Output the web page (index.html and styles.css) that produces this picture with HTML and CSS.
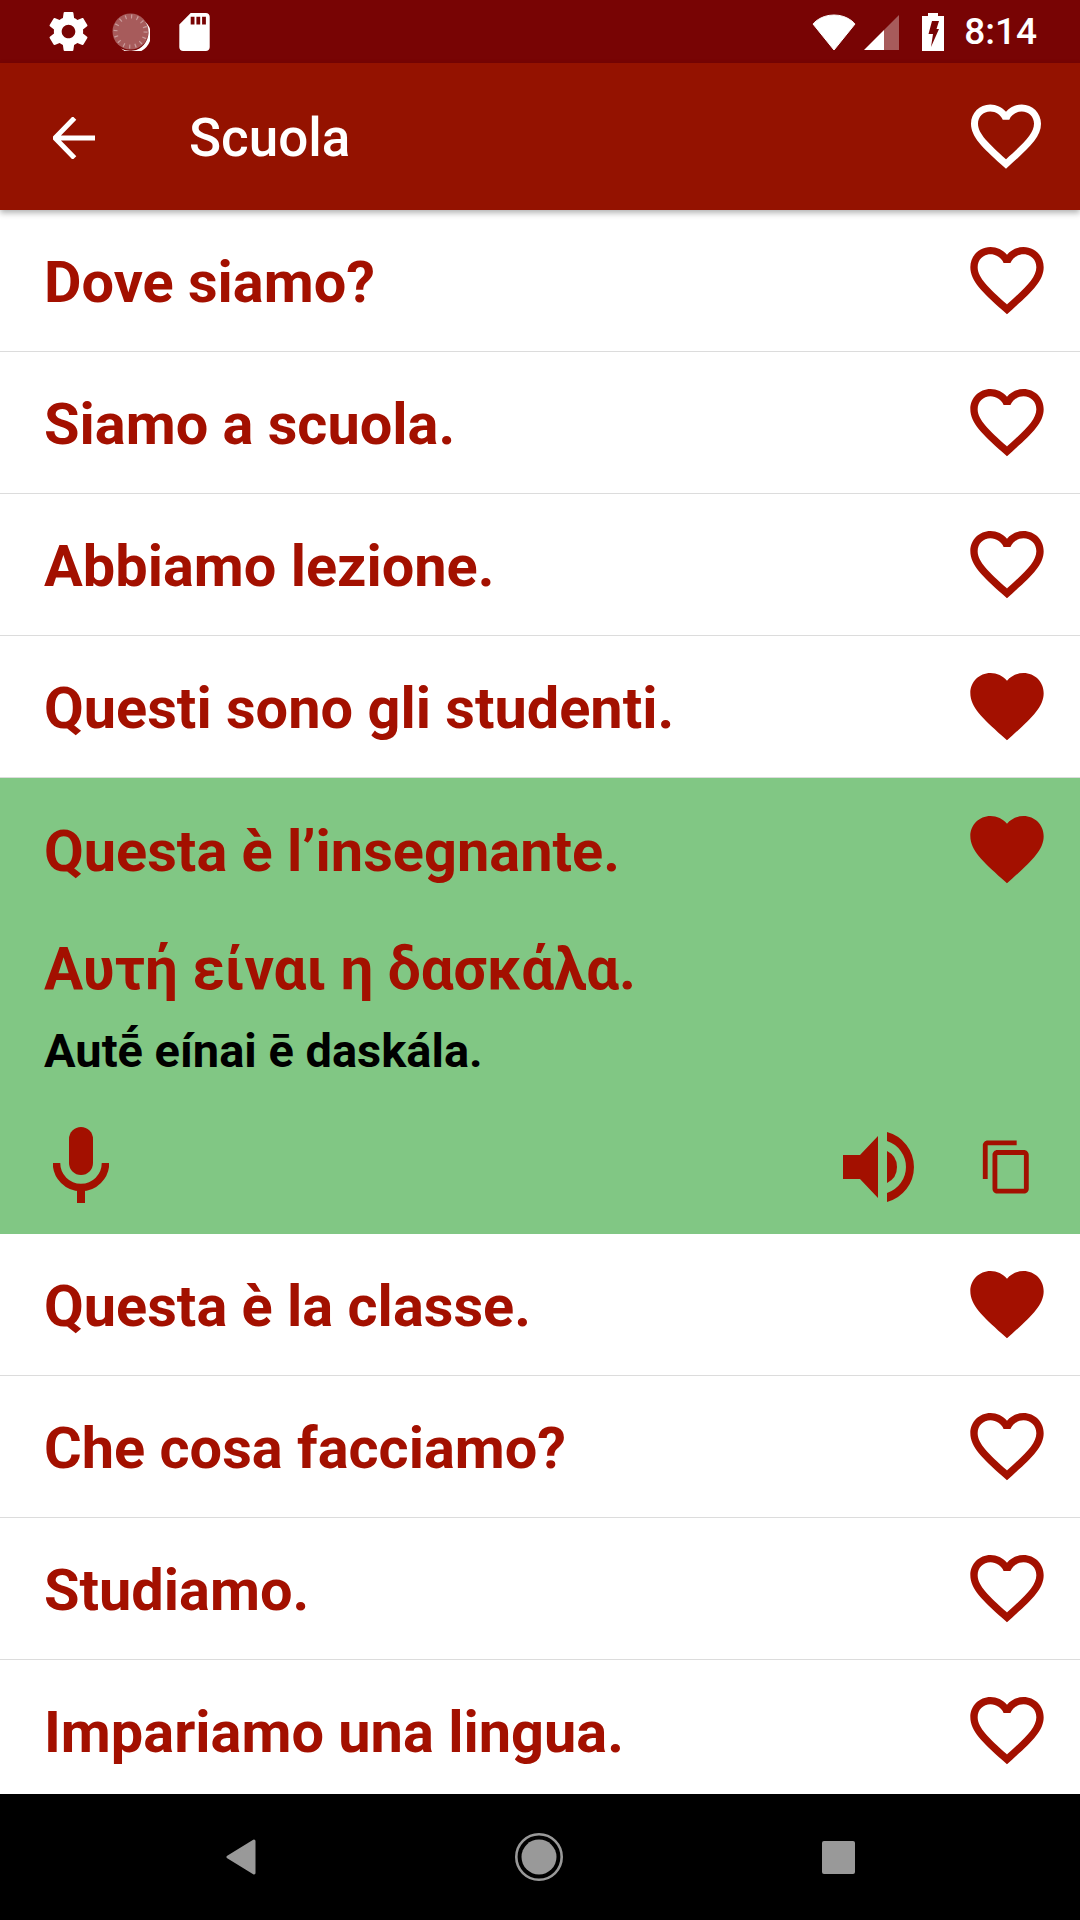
FILE: index.html
```html
<!DOCTYPE html>
<html lang="it">
<head>
<meta charset="utf-8">
<title>Scuola</title>
<link rel="stylesheet" href="styles.css">
</head>
<body>
<svg class="defs" width="0" height="0" aria-hidden="true">
  <defs>
    <symbol id="heart-o" viewBox="0 0 24 24"><path d="M16.5 3c-1.74 0-3.41.81-4.5 2.09C10.91 3.81 9.24 3 7.5 3 4.42 3 2 5.42 2 8.5c0 3.78 3.4 6.86 8.55 11.54L12 21.35l1.45-1.32C18.6 15.36 22 12.28 22 8.5 22 5.42 19.58 3 16.5 3zm-4.4 15.55l-.1.1-.1-.1C7.14 14.24 4 11.39 4 8.5 4 6.5 5.5 5 7.5 5c1.54 0 3.04.99 3.57 2.36h1.87C13.46 5.99 14.96 5 16.5 5c2 0 3.5 1.5 3.5 3.5 0 2.89-3.14 5.74-7.9 10.05z"/></symbol>
    <symbol id="heart-f" viewBox="0 0 24 24"><path d="M12 21.35l-1.45-1.32C5.4 15.36 2 12.28 2 8.5 2 5.42 4.42 3 7.5 3c1.74 0 3.41.81 4.5 2.09C13.09 3.81 14.76 3 16.5 3 19.58 3 22 5.42 22 8.5c0 3.78-3.4 6.86-8.55 11.54L12 21.35z"/></symbol>
  </defs>
</svg>
<div class="screen">
  <header class="status">
    <svg class="st-gear" viewBox="2 2 20 20"><path d="M19.43 12.98c.04-.32.07-.64.07-.98s-.03-.66-.07-.98l2.11-1.65c.19-.15.24-.42.12-.64l-2-3.46c-.12-.22-.39-.3-.61-.22l-2.49 1c-.52-.4-1.08-.73-1.69-.98l-.38-2.65C14.46 2.18 14.25 2 14 2h-4c-.25 0-.46.18-.49.42l-.38 2.65c-.61.25-1.17.59-1.69.98l-2.49-1c-.23-.09-.49 0-.61.22l-2 3.46c-.13.22-.07.49.12.64l2.11 1.65c-.04.32-.07.65-.07.98s.03.66.07.98l-2.11 1.65c-.19.15-.24.42-.12.64l2 3.46c.12.22.39.3.61.22l2.49-1c.52.4 1.08.73 1.69.98l.38 2.65c.03.24.24.42.49.42h4c.25 0 .46-.18.49-.42l.38-2.65c.61-.25 1.17-.59 1.69-.98l2.49 1c.23.09.49 0 .61-.22l2-3.46c.12-.22.07-.49-.12-.64l-2.11-1.65zM12 15.5c-1.93 0-3.5-1.57-3.5-3.5s1.57-3.5 3.5-3.5 3.5 1.57 3.5 3.5-1.57 3.5-3.5 3.5z"/></svg>
    <svg class="st-disc" viewBox="0 0 38 38">
      <circle cx="18.500" cy="18.500" r="18" fill="#fff" fill-opacity=".35"/>
      <path d="M33 8.500a18.500 18.500 0 0 1-24 27 18 18 0 0 0 24-27z" fill="#fff"/>
      <circle cx="18.500" cy="18.500" r="15" fill="none" stroke="#fff" stroke-opacity=".4" stroke-width="4" stroke-dasharray="1.200 4.700"/>
    </svg>
    <svg class="st-sd" viewBox="4 2 16 20"><path d="M18 2h-8L4.020 8 4 20c0 1.100.9 2 2 2h12c1.100 0 2-.9 2-2V4c0-1.100-.9-2-2-2zm-6 6h-2V4h2v4zm3 0h-2V4h2v4zm3 0h-2V4h2v4z"/></svg>
    <span class="st-spacer"></span>
    <svg class="st-wifi" viewBox="0 0 44 36"><path d="M22 36 1 10C1 10 8 1 22 1s21 9 21 9L22 36z" stroke="#fff" stroke-width="1" stroke-linejoin="round"/></svg>
    <svg class="st-signal" viewBox="0 0 35 35"><path d="M0 35 20 15V35z"/><path d="M20 15 35 0V35H20z" fill-opacity=".35"/></svg>
    <svg class="st-batt" viewBox="0 0 22 38"><path fill-rule="evenodd" d="M6 0h10v3h6v35H0V3h6V0zM10 8h7l-2.500 8H17L9 34l2-13H6.500z"/></svg>
    <span class="st-time">8:14</span>
  </header>

  <div class="appbar">
    <svg class="ab-back" viewBox="0 0 42 42"><path d="M1.500 21H42M21.500 1 2 21l19.500 20" fill="none" stroke="#fff" stroke-width="5"/></svg>
    <h1 class="ab-title">Scuola</h1>
    <svg class="heart-white"><use href="#heart-o"/></svg>
  </div>

  <main class="list">
    <div class="row"><span class="phrase">Dove siamo?</span><svg class="heart"><use href="#heart-o"/></svg></div>
    <div class="row"><span class="phrase">Siamo a scuola.</span><svg class="heart"><use href="#heart-o"/></svg></div>
    <div class="row"><span class="phrase">Abbiamo lezione.</span><svg class="heart"><use href="#heart-o"/></svg></div>
    <div class="row"><span class="phrase">Questi sono gli studenti.</span><svg class="heart"><use href="#heart-f"/></svg></div>
    <section class="open">
      <div class="open-head"><span class="phrase">Questa è l’insegnante.</span><svg class="heart"><use href="#heart-f"/></svg></div>
      <div class="greek">Αυτή είναι η δασκάλα.</div>
      <div class="translit">Autḗ eínai ē daskála.</div>
      <div class="actions">
        <svg class="ic-mic" viewBox="0 0 56 76"><rect x="16" y="0" width="24" height="48" rx="12"/><path d="M3.500 36a24.500 24.500 0 0 0 49 0" fill="none" stroke="currentColor" stroke-width="7.500"/><rect x="24" y="60" width="8" height="16"/></svg>
        <span class="act-spacer"></span>
        <svg class="ic-speak" viewBox="0 0 72 70"><path d="M0 23h17L35 4v62L17 47H0z"/><path d="M44 19A17.800 17.800 0 0 1 44 51z"/><path d="M44 0A36.200 36.200 0 0 1 44 70V61A27.300 27.300 0 0 0 44 9z"/></svg>
        <svg class="ic-copy" viewBox="0 0 24 24"><path d="M16 1H4c-1.100 0-2 .9-2 2v14h2V3h12V1zm3 4H8c-1.100 0-2 .9-2 2v14c0 1.100.9 2 2 2h11c1.100 0 2-.9 2-2V7c0-1.100-.9-2-2-2zm0 16H8V7h11v14z"/></svg>
      </div>
    </section>
    <div class="row"><span class="phrase">Questa è la classe.</span><svg class="heart"><use href="#heart-f"/></svg></div>
    <div class="row"><span class="phrase">Che cosa facciamo?</span><svg class="heart"><use href="#heart-o"/></svg></div>
    <div class="row"><span class="phrase">Studiamo.</span><svg class="heart"><use href="#heart-o"/></svg></div>
    <div class="row"><span class="phrase">Impariamo una lingua.</span><svg class="heart"><use href="#heart-o"/></svg></div>
  </main>

  <nav class="navbar">
    <svg class="nav-back" viewBox="0 0 30 36"><path d="M28 2 2 18l26 16z" stroke="#999" stroke-width="3" stroke-linejoin="round"/></svg>
    <svg class="nav-home" viewBox="0 0 48 48"><circle cx="24" cy="24" r="22.700" fill="none" stroke="#999" stroke-width="2.600"/><circle cx="24" cy="24" r="17.500"/></svg>
    <span class="nav-square"></span>
  </nav>
</div>
</body>
</html>
```

FILE: styles.css
```css
* { box-sizing: border-box; }
html, body { margin: 0; padding: 0; }
body { width: 1080px; height: 1920px; overflow: hidden; font-family: Roboto, "Noto Sans", sans-serif; background: #fff; }
.defs { position: absolute; }
svg { display: block; flex: none; fill: currentColor; }
.screen { width: 1080px; height: 1920px; display: flex; flex-direction: column; color: #a31000; }

.status { height: 63px; flex: none; background: #780404; color: #fff; display: flex; align-items: center; padding: 0 43px 0 49px; }
.st-gear { width: 39px; height: 39px; }
.st-disc { width: 38px; height: 38px; margin-left: 24px; }
.st-sd { width: 31px; height: 38px; margin-left: 29px; }
.st-spacer { flex: 1; }
.st-wifi { width: 44px; height: 36px; }
.st-signal { width: 35px; height: 35px; margin-left: 8px; margin-top: 1px; }
.st-batt { width: 22px; height: 38px; margin-left: 23px; }
.st-time { font-size: 37px; font-weight: 500; margin-left: 20px; }

.appbar { height: 147px; flex: none; background: #941200; color: #fff; display: flex; align-items: center; padding: 0 32px 0 53px; position: relative; z-index: 2; box-shadow: 0 3px 6px rgba(0,0,0,.3); }
.ab-back { width: 42px; height: 42px; margin-top: 2px; }
.ab-title { flex: 1; margin: 3px 0 0 94px; font-size: 53px; font-weight: 500; }
.heart-white { width: 84px; height: 84px; color: #fff; margin-bottom: 2px; }

.heart { width: 88px; height: 88px; }

.list { flex: 1; min-height: 0; overflow: hidden; }
.row { height: 142px; display: flex; align-items: center; justify-content: space-between; padding: 0 29px 1px 44px; border-bottom: 1px solid #dcdcdc; }
.phrase { font-size: 57.7px; font-weight: 700; padding-top: 4px; }

.open { height: 456px; background: #81c784; display: flex; flex-direction: column; padding: 0 29px 0 44px; }
.open-head { height: 141px; flex: none; display: flex; align-items: center; justify-content: space-between; }
.greek { font-size: 58.3px; font-weight: 700; line-height: 64px; margin-top: 18px; }
.translit { font-size: 47px; font-weight: 700; color: #000; line-height: 52px; margin-top: 24px; }
.actions { display: flex; align-items: center; margin-top: 50px; padding-left: 9px; }
.act-spacer { flex: 1; }
.ic-mic { width: 56px; height: 76px; }
.ic-speak { width: 72px; height: 70px; margin-top: 4px; }
.ic-copy { width: 58px; height: 58px; margin-top: 4px; margin-left: 63px; margin-right: 15px; }

.navbar { height: 126px; flex: none; background: #000; display: flex; align-items: center; gap: 259px; padding-left: 226px; position: relative; z-index: 2; }
.nav-back { width: 30px; height: 36px; color: #999; }
.nav-home { width: 48px; height: 48px; color: #999; }
.nav-home circle:last-child { fill: #999; }
.nav-square { width: 33px; height: 33px; background: #999; border-radius: 2px; }
```
